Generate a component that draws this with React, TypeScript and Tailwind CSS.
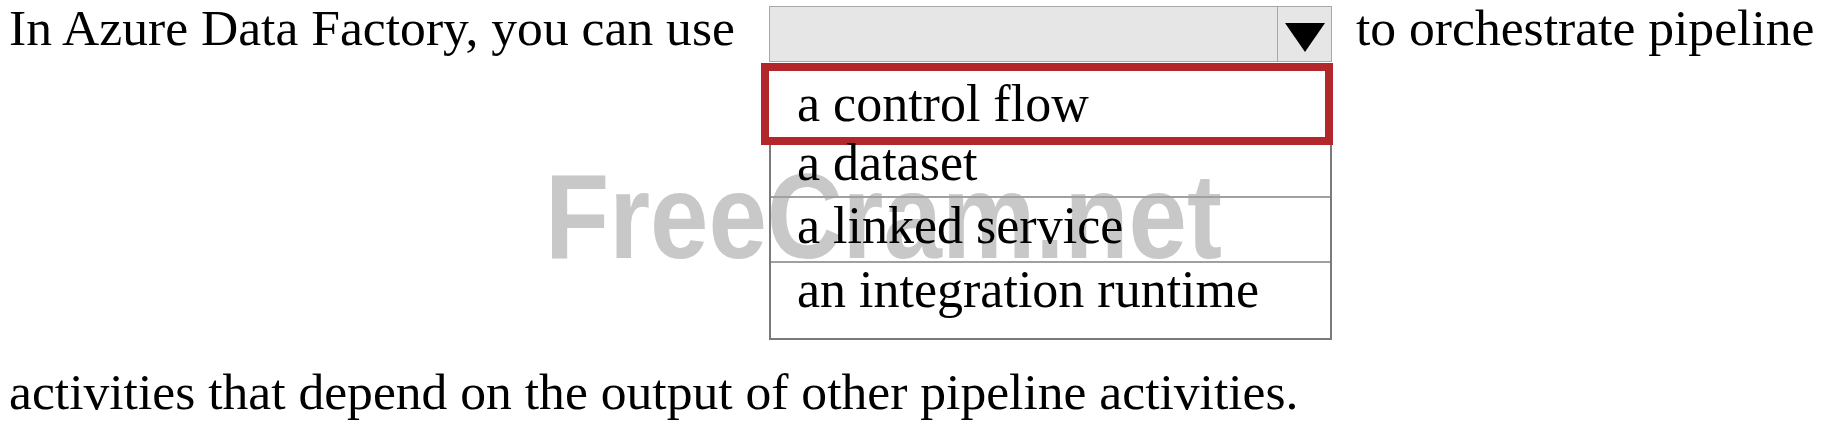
export default function App() {
  return (
    <div className="relative w-[1834px] h-[432px] bg-white overflow-hidden font-['Liberation_Serif','Times_New_Roman',serif] text-[52px] text-black">
      <div className="absolute left-[545px] top-[156px] font-['Liberation_Sans',Arial,sans-serif] font-bold text-[120px] leading-none text-[#c8c8c8] origin-left scale-x-[0.875] pointer-events-none select-none whitespace-nowrap">
        FreeCram.net
      </div>
      <div className="relative flex items-start">
        <div className="w-[761px] pl-[9px] text-[51.6px] leading-[56px] whitespace-nowrap">In Azure Data Factory, you can use</div>
        <div className="w-[572px] flex flex-col">
          <div className="ml-[8px] mr-[1px] mt-[6px] h-[56px] flex bg-[#e6e6e6] border border-[#a8a8a8]">
            <div className="flex-1" />
            <div className="w-[54px] border-l border-[#a8a8a8] flex justify-center pt-[16px]">
              <svg width="40" height="29" viewBox="0 0 40 29">
                <polygon points="0,0 40,0 20,29" fill="#000" />
              </svg>
            </div>
          </div>
          <div className="mt-[1px] h-[82px] border-[8px] border-[#b3262c] pl-[28px] pt-[15px] leading-[36px] whitespace-nowrap">
            a control flow
          </div>
          <div className="ml-[8px] mr-[1px] border-l-2 border-r-2 border-b-2 border-[#7a7a7a] leading-[36px] whitespace-nowrap">
            <div className="h-[53px] pl-[26px] border-b-2 border-[#a0a0a0]">a dataset</div>
            <div className="h-[65px] pl-[26px] pt-[10px] border-b-2 border-[#a0a0a0]">a linked service</div>
            <div className="h-[75px] pl-[26px] pt-[9px]">an integration runtime</div>
          </div>
        </div>
        <div className="pl-[23px] text-[51.6px] leading-[56px] whitespace-nowrap">to orchestrate pipeline</div>
      </div>
      <div className="relative pl-[9px] mt-[24px] text-[51.6px] leading-[56px] whitespace-nowrap">
        activities that depend on the output of other pipeline activities.
      </div>
    </div>
  );
}
